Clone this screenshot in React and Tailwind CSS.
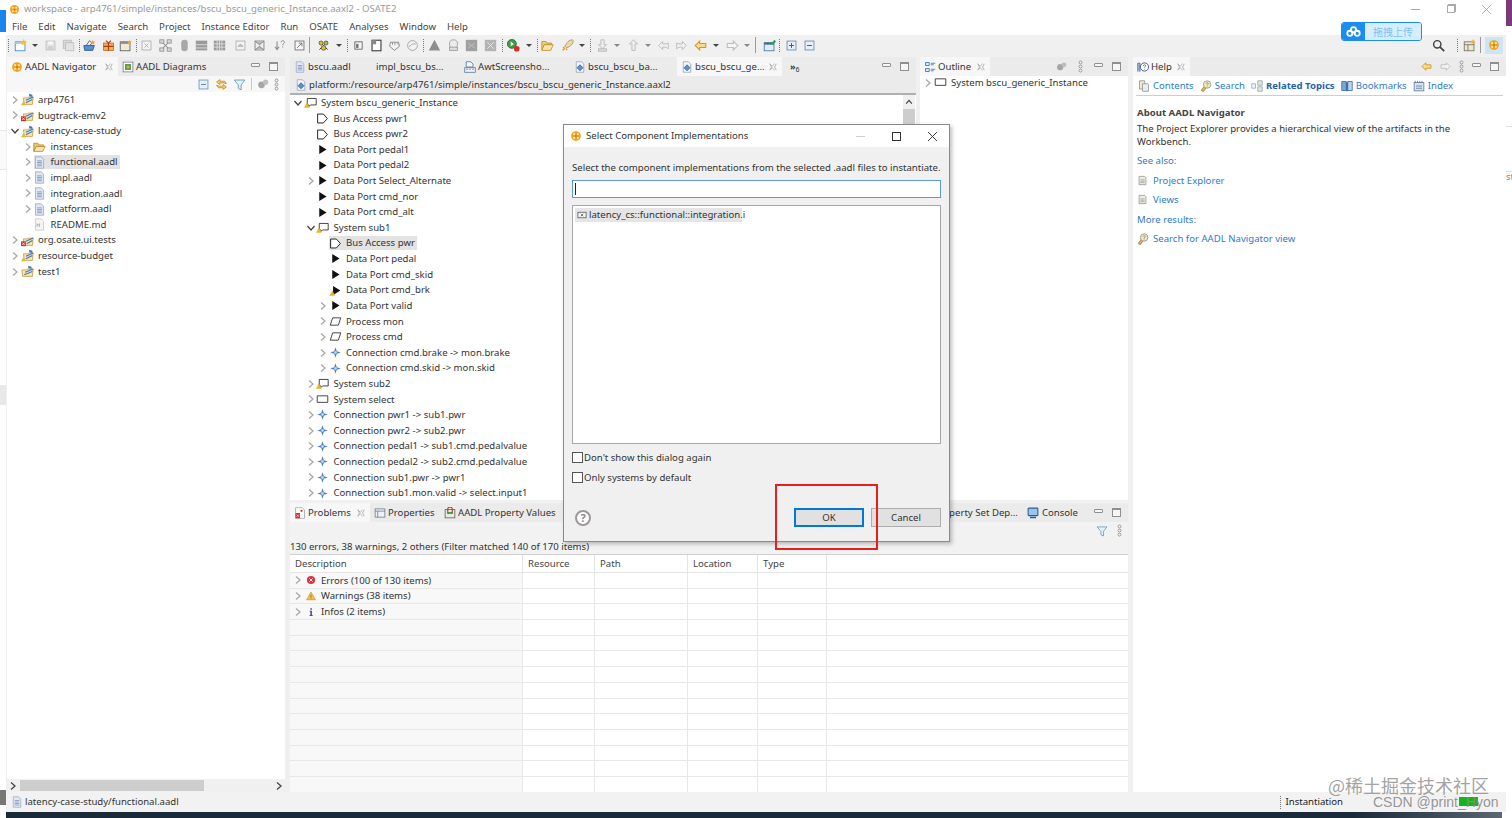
import React from 'react';

const G = {
  osate: (<><circle cx="8" cy="8" r="6.5" fill="#f3a21f" /><circle cx="5.5" cy="5.5" r="1.4" fill="#ffe9b0" /><circle cx="10.5" cy="5.5" r="1.4" fill="#ffe9b0" /><circle cx="5.5" cy="10.5" r="1.4" fill="#ffe9b0" /><circle cx="10.5" cy="10.5" r="1.4" fill="#ffe9b0" /><circle cx="8" cy="8" r="1.2" fill="#c9700c" /></>),
  project: (<><path d="M1 6h5l1-1h8l-1 9H2z" fill="#fbe6a8" stroke="#c89a3c" /><path d="M5 9l10-4M4 12l10-4" stroke="#3f78c4" strokeWidth="1.4" /><path d="M9 1l4 1v3l-4-1z" fill="#3f78c4" /></>),
  warnProject: (<><path d="M3 6h5l1-1h6l-1 9H4z" fill="#fbe6a8" stroke="#c89a3c" /><path d="M6 9l9-4M6 12l8-4" stroke="#3f78c4" strokeWidth="1.4" /><path d="M10 1l4 1v3l-4-1z" fill="#3f78c4" /><path d="M3 10l3 5H0z" fill="#eeb422" /></>),
  errProject: (<><path d="M3 6h5l1-1h6l-1 9H4z" fill="#fbe6a8" stroke="#c89a3c" /><path d="M6 9l9-4M7 12l7-4" stroke="#3f78c4" strokeWidth="1.4" /><rect x="0" y="9" width="6" height="6" fill="#d92b2b" /><path d="M1.5 10.5l3 3m0-3l-3 3" stroke="#fff" /></>),
  folder: (<><path d="M1 4h5l1 2h6v2H4l-3 6z" fill="#e9c66d" stroke="#b48a2e" /><path d="M4 8h11l-3 6H1z" fill="#fbe6a8" stroke="#b48a2e" /></>),
  aadl: (<><path d="M3 1h7l3 3v11H3z" fill="#dfe7f4" stroke="#9aa9c2" /><path d="M5 6h6M5 8h6M5 10h6M5 12h6" stroke="#7e93b8" /></>),
  md: (<><path d="M3 1h7l3 3v11H3z" fill="#f5f5f5" stroke="#c8c8c8" /><path d="M5 11V7l1.5 2L8 7v4" stroke="#aaa" fill="none" /></>),
  bus: (<path d="M2 2.5h7l5 5.5-5 5.5H2z" fill="#fff" stroke="#222" strokeWidth="1.2" />),
  port: (<path d="M4 2.5l9 5.5-9 5.5z" fill="#111" />),
  portWarn: (<><path d="M5 2.5l9 5.5-9 5.5z" fill="#111" /><path d="M4 8l3.5 6.5H.5z" fill="#eeb422" /></>),
  system: (<path d="M1.5 3.5h13v8h-13z" fill="#fff" stroke="#333" strokeWidth="1.1" />),
  systemWarn: (<><path d="M4 3h11v8H8l-2 2v-2H4z" fill="#fff" stroke="#333" strokeWidth="1.1" /><path d="M3.5 8l3.5 6.5H0z" fill="#eeb422" /></>),
  process: (<path d="M4.5 3.5h10l-3 9h-10z" fill="#fff" stroke="#333" strokeWidth="1.1" />),
  conn: (<><path d="M8 1.500l1.600 4.900L14.500 8l-4.900 1.600L8 14.500 6.400 9.600 1.500 8l4.900-1.600z" fill="#4f7fb8" /><circle cx="8" cy="8" r="1.800" fill="#b9d2ee" /></>),
  problems: (<><path d="M2 1h9l3 3v11H2z" fill="#fff" stroke="#9aa0aa" /><rect x="2" y="8" width="6" height="7" fill="#d92b2b" /><path d="M3.5 10l3 3m0-3l-3 3" stroke="#fff" /><circle cx="10" cy="5" r="1.5" fill="#d92b2b" /></>),
  props: (<><rect x="1.5" y="2.5" width="13" height="11" fill="#eef1f5" stroke="#64748b" /><path d="M1.5 5.5h13M5 5.5v8" stroke="#64748b" /></>),
  propVals: (<><rect x="1.5" y="3.5" width="13" height="11" fill="#e8edd8" stroke="#4b5563" /><path d="M5 9V3a3 3 0 016 0v6" fill="none" stroke="#c0392b" strokeWidth="1.5" /><path d="M5 8h6" stroke="#15803d" strokeWidth="2" /></>),
  diagrams: (<><rect x="1.5" y="1.5" width="13" height="13" fill="#fff" stroke="#6b7280" /><rect x="4" y="4" width="8" height="8" fill="#5f9e4d" /><circle cx="8" cy="8" r="2" fill="#d9b43a" /></>),
  outline: (<><path d="M2 2h5v4H2zM2 10h5v4H2z" fill="#dbeafe" stroke="#2563a8" /><path d="M9 3h6M9 5h4M9 11h6M9 13h4" stroke="#2563a8" /></>),
  console: (<><rect x="1.5" y="1.5" width="13" height="10" rx="1" fill="#9cc3ea" stroke="#2a5c96" strokeWidth="1.4" /><path d="M4 14h8" stroke="#2a5c96" strokeWidth="2" /></>),
  help: (<><circle cx="10" cy="8" r="5.5" fill="#fff" stroke="#3a5f8f" strokeWidth="1.2" /><path d="M8.5 6.5c0-2 3-2 3 0 0 1.200-1.500 1.200-1.500 2.500M10 10.500v1" fill="none" stroke="#3a5f8f" /><path d="M1 14V3h3v11" fill="#a8c0dc" stroke="#3a5f8f" /></>),
  contents: (<><path d="M2 1h7v11H2z" fill="#f3e8cf" stroke="#8a8a8a" /><path d="M6 5h7l1 1v9H6z" fill="#e7edf6" stroke="#8a8a8a" /></>),
  searchTopic: (<><path d="M6 8l-4.500 6 3 1.500 4-5.500" fill="#e6b655" stroke="#8a7a4a" /><circle cx="9.500" cy="6" r="5" fill="#f8e8b4" stroke="#8a8a8a" /><path d="M8 4.500c.5-1.500 3.500-1 3 .8-.3.900-1.500 1-1.500 2.200M9.500 9v.8" fill="none" stroke="#3b82c4" /></>),
  related: (<><path d="M1 5h5v6H1z" fill="#f1f5fa" stroke="#8ca0bc" /><path d="M9 1h6v6H9zM9 9h6v6H9z" fill="#e8e4d0" stroke="#8ca0bc" /></>),
  bookmarks: (<><path d="M1 2h6v12H1z" fill="#7ea6d8" stroke="#2d5f9c" /><path d="M9 2h6v12H9z" fill="#bcd3ec" stroke="#2d5f9c" /><path d="M7 3h2v12H7z" fill="#2d5f9c" /></>),
  indexIcon: (<><rect x="1.500" y="3.500" width="13" height="11" fill="#d9e3ef" stroke="#4f6f97" /><path d="M3 1v3M6 1v3M9 1v3M12 1v3" stroke="#4f6f97" /><path d="M4 8h8M4 11h8" stroke="#4f6f97" /></>),
  page: (<><path d="M3 2h8l2 2v10H3z" fill="#ececdf" stroke="#888" /><path d="M5 7h6M5 9h6M5 11h6" stroke="#999" /></>),
  new: (<><rect x="1.500" y="3.500" width="12" height="11" fill="#fff" stroke="#3f7fb8" /><path d="M1.500 3.500h12v2.500h-12z" fill="#a9c9e8" /><path d="M12 0l1.200 2.500 2.800.5-2 2 .5 2.800-2.500-1.300-2.500 1.300.5-2.800-2-2 2.800-.5z" fill="#f2c230" /></>),
  save: (<><rect x="2.500" y="2.500" width="11" height="11" fill="#e2e2e2" stroke="#bdbdbd" /><rect x="5" y="3" width="6" height="4" fill="#f5f5f5" /><rect x="5" y="9" width="6" height="4" fill="#cfcfcf" /></>),
  saveall: (<><rect x="1.500" y="1.500" width="10" height="10" fill="#d8d8d8" stroke="#bdbdbd" /><rect x="4.500" y="4.500" width="10" height="10" fill="#e2e2e2" stroke="#bdbdbd" /></>),
  pkg: (<><path d="M1 8h13l-2 6H2z" fill="#5b8dd0" stroke="#28528c" /><path d="M4 8l4-6 3 3-3 3z" fill="#e7edf6" stroke="#28528c" /><path d="M12 1l1 2 2 .5-1.500 1.500.5 2-2-1-2 1 .5-2L9 3.500l2-.5z" fill="#eda62c" /></>),
  box: (<><rect x="2" y="5" width="12" height="9" fill="#f0b357" stroke="#b36b16" /><path d="M8 5v9M2 9h12" stroke="#b33b16" strokeWidth="1.500" /><path d="M5 2l3 3 3-3" fill="none" stroke="#b33b16" strokeWidth="1.400" /></>),
  docstar: (<><rect x="1.500" y="3.500" width="12" height="11" fill="#f0ead8" stroke="#555" /><path d="M1.500 3.500h12v2.500h-12z" fill="#8c8c8c" /><path d="M13 1l.8 1.800 2 .3-1.400 1.400.3 2-1.700-1-1.800 1 .4-2L10.200 3l2-.3z" fill="#f0a92c" /></>),
  xbox: (<><rect x="2.500" y="2.500" width="11" height="11" fill="#f3f3f3" stroke="#a8a8a8" /><path d="M5.500 5.500l5 5m0-5l-5 5" stroke="#a8a8a8" /></>),
  nodes: (<><path d="M4 4l8 8m0-8l-8 8" stroke="#8a8a8a" strokeWidth="1.300" /><rect x="1" y="1" width="5" height="4" fill="#dcdcdc" stroke="#8a8a8a" /><rect x="10" y="1" width="5" height="4" fill="#dcdcdc" stroke="#8a8a8a" /><rect x="1" y="11" width="5" height="4" fill="#dcdcdc" stroke="#8a8a8a" /><rect x="10" y="11" width="5" height="4" fill="#dcdcdc" stroke="#8a8a8a" /></>),
  capsule: (<rect x="4" y="1" width="8" height="14" rx="4" fill="#a8a8a8" />),
  bars: (<><rect x="1" y="2" width="14" height="12" fill="#9a9a9a" /><path d="M1 7h14M1 11h14" stroke="#e6e6e6" /></>),
  grid: (<><rect x="1" y="2" width="14" height="12" fill="#9a9a9a" /><path d="M1 6h14M1 10h14M5 2v12M8 2v12M11 2v12" stroke="#e6e6e6" /></>),
  frame: (<><rect x="2.500" y="2.500" width="11" height="11" fill="#f3f3f3" stroke="#a8a8a8" /><path d="M5 9l3-3 3 3z" fill="#c8c8c8" stroke="#a8a8a8" /></>),
  bow: (<><rect x="2.500" y="2.500" width="11" height="11" fill="#eee" stroke="#777" /><path d="M2.500 2.500L8 7l5.500-4.500M2.500 13.500L8 9l5.500 4.500" fill="#bbb" stroke="#777" /></>),
  arrowq: (<><path d="M5 3v9m-2.500-2.500L5 13l2.500-3.500" fill="none" stroke="#888" strokeWidth="1.300" /><path d="M10 4c0-2.500 4-2.500 4 0 0 1.500-2 1.500-2 3.500M12 9v1.500" fill="none" stroke="#888" strokeWidth="1.200" /></>),
  expand: (<><rect x="2.500" y="2.500" width="11" height="11" fill="#f6f6f6" stroke="#666" /><path d="M5 11l6-6m-4 0h4v4" fill="none" stroke="#666" /></>),
  bug: (<><path d="M3 3l10 10M13 3L3 13" stroke="#333" strokeWidth="1.200" /><circle cx="5" cy="5" r="2.500" fill="#e3c02c" stroke="#555" /><circle cx="11" cy="5" r="2.500" fill="#a8c04a" stroke="#555" /><circle cx="8" cy="11" r="2.800" fill="#e3c02c" stroke="#555" /></>),
  smalldoc: (<><rect x="3.500" y="3.500" width="9" height="9" fill="#f5f5f5" stroke="#555" /><rect x="5" y="6" width="3" height="5" fill="#777" /></>),
  doc: (<><rect x="2.500" y="1.500" width="11" height="13" fill="#fff" stroke="#333" strokeWidth="1.300" /><rect x="2.500" y="1.500" width="5" height="5" fill="#888" /></>),
  paw: (<><path d="M3 4l10 0 1 5-6 5-6-5z" fill="#f2f2f2" stroke="#777" /><path d="M5 6h1M8 6h1M11 6h.5" stroke="#555" strokeWidth="1.500" /></>),
  ring: (<><circle cx="8" cy="8" r="6" fill="#f2f2f2" stroke="#999" /><path d="M4 10c2-4 5-4 8-4" fill="none" stroke="#999" /></>),
  tri: (<path d="M8 1l7 13H1z" fill="#8d8d8d" />),
  stamp: (<><circle cx="8" cy="6" r="5" fill="#ececec" stroke="#999" /><rect x="3" y="10" width="10" height="4" fill="#ddd" stroke="#999" /></>),
  graysq: (<><rect x="1" y="1" width="14" height="14" fill="#a0a0a0" /><path d="M4 5l8 6m0-6l-8 6" stroke="#c8c8c8" /></>),
  graychk: (<><rect x="1" y="1" width="14" height="14" fill="#b4b4b4" /><path d="M4 4l4 4 4-4M4 12l4-4 4 4" fill="none" stroke="#eee" /></>),
  run: (<><circle cx="6" cy="6" r="5.500" fill="#3d9c4a" stroke="#1f6b2a" /><path d="M4.500 3l4 3-4 3z" fill="#fff" /><circle cx="12" cy="12" r="3.500" fill="#d42c2c" /></>),
  openfolder: (<><path d="M1 3h5l1 2h6v2H4l-2 6H1z" fill="#edcf80" stroke="#bf8a25" /><path d="M4 7h11l-3 7H1z" fill="#fbe6a8" stroke="#bf8a25" /></>),
  rocket: (<><path d="M14 1c-4 0-7 3-9 8l2 2c5-2 8-5 8-9z" fill="#e9d7a5" stroke="#a5955a" /><path d="M5 9l-3 1 1 1zM7 11l-1 3 2-1z" fill="#d96a2b" /><path d="M2 14l3-3" stroke="#e6a630" strokeWidth="2" /></>),
  personDown: (<><path d="M6 1h4v6h3l-5 5-5-5h3z" fill="#ededed" stroke="#b5b5b5" /><rect x="3" y="12" width="10" height="3" fill="#dcdcdc" stroke="#b5b5b5" /></>),
  personUp: (<><path d="M8 1l5 5h-3v8H6V6H3z" fill="#ededed" stroke="#b5b5b5" /></>),
  outlineLeft: (<path d="M7 3L2 8l5 5v-3h4l3 2V5l-3 1H7z" fill="#f0f0f0" stroke="#b5b5b5" />),
  outlineRight: (<path d="M9 3l5 5-5 5v-3H5l-3 2V5l3 1h4z" fill="#f0f0f0" stroke="#b5b5b5" />),
  yellowLeft: (<path d="M7 2.500L1.500 8 7 13.500V10.500h7.500v-5H7z" fill="#f6dc8a" stroke="#d19a1f" strokeWidth="1.300" />),
  grayRight: (<path d="M9 2.500L14.500 8 9 13.500V10.500H1.500v-5H9z" fill="#f5f5f5" stroke="#bcbcbc" strokeWidth="1.300" />),
  newwin: (<><rect x="1.500" y="4.500" width="12" height="10" fill="#e3edf7" stroke="#3f6f9f" /><path d="M1.500 4.500h12v2.500h-12z" fill="#3f6f9f" /><path d="M10 6l4-5 2 2-4 4z" fill="#2e9e4a" /></>),
  plusbox: (<><rect x="2.500" y="2.500" width="11" height="11" fill="#e7eff8" stroke="#5a86b5" /><path d="M5 8h6M8 5v6" stroke="#2f5f95" strokeWidth="1.200" /></>),
  minusbox: (<><rect x="2.500" y="2.500" width="11" height="11" fill="#e7eff8" stroke="#5a86b5" /><path d="M5 8h6" stroke="#2f5f95" strokeWidth="1.200" /></>),
  collapse: (<><rect x="2.500" y="2.500" width="11" height="11" fill="#e7eff8" stroke="#6b8fb8" /><path d="M5 8h6" stroke="#51759d" /></>),
  link: (<><path d="M2 5l4-3v2h6l2 3-3-1H6v2z" fill="#f4d27a" stroke="#c98a1f" /><path d="M14 11l-4 3v-2H4l-2-3 3 1h5V8z" fill="#f4d27a" stroke="#c98a1f" /></>),
  filter: (<path d="M1.500 2.500h13L10 8.500v6L6.500 13V8.500z" fill="#e6f0f7" stroke="#5c93b5" />),
  gears: (<><circle cx="6" cy="9" r="4.500" fill="#a6a6a6" /><circle cx="11.500" cy="5.500" r="3.500" fill="#bdbdbd" /></>),
  search: (<><circle cx="6.500" cy="6.500" r="4.500" fill="none" stroke="#444" strokeWidth="1.800" /><path d="M10 10l5 5" stroke="#444" strokeWidth="2.200" /></>),
  perspective: (<><rect x="1.500" y="3.500" width="12" height="11" fill="#f1e7c9" stroke="#6b6b6b" /><path d="M1.500 7h12M6 7v7.500" stroke="#6b6b6b" /><path d="M12.500 0l1 2 2 .4-1.500 1.400.4 2-1.900-1-1.900 1 .4-2L9.500 2.400l2-.4z" fill="#eeb422" /></>),
  impl: (<><rect x="1.500" y="3.500" width="13" height="9" fill="#f5f5f5" stroke="#333" /><path d="M6 6l4 4m0-4l-4 4" stroke="#333" /></>),
  error: (<><circle cx="8" cy="8" r="6.500" fill="#d8343f" /><path d="M5.500 5.500l5 5m0-5l-5 5" stroke="#fff" strokeWidth="1.500" /></>),
  warning: (<><path d="M8 1.500l7 12.500H1z" fill="#f2c14a" stroke="#c98a1f" /><path d="M8 6v4.500M8 11.500v1" stroke="#7a4a00" /></>),
  info: (<path d="M7 2h2.400v2.200H7zM6 6h3.400v7H11v1.500H5.500V13H7V7.500H6z" fill="#3a3fb0" />),
  awt: (<><path d="M3 1h6l3 3v4H3z" fill="#f5f5f5" stroke="#3f6f9f" /><rect x="1" y="9" width="14" height="6" fill="#f0f5fa" stroke="#3f6f9f" /><path d="M3 11h2M7 11h2M11 11h2" stroke="#b33b16" /></>),
  inst: (<><path d="M3 1h7l3 3v11H3z" fill="#f3f6fb" stroke="#8ca0bc" /><path d="M8 5l4 4-4 4-4-4z" fill="#5f8fc7" stroke="#2f5f95" /></>),
};

const Glyph = ({ name, className = 'size-[12px]' }) => (
  <svg viewBox="0 0 16 16" className={`${className} shrink-0`}>{G[name]}</svg>
);

const Chevron = ({ open, dark }) => (
  <svg viewBox="0 0 10 10" className="size-[10px]" fill="none" stroke={dark ? '#444' : '#a8a8a8'} strokeWidth="1.300">
    <path d={open ? 'M1.500 3l3.500 4 3.500-4' : 'M3 1.500l4 3.500-4 3.500'} />
  </svg>
);

const Kebab = () => (
  <svg viewBox="0 0 6 16" className="h-[13px] w-[5px]" fill="#f4f4f4" stroke="#8a8a8a">
    <circle cx="3" cy="3" r="1.800" /><circle cx="3" cy="8" r="1.800" /><circle cx="3" cy="13" r="1.800" />
  </svg>
);

const CloseX = () => (
  <svg viewBox="0 0 10 10" className="size-[8px] shrink-0" fill="none" stroke="#a5a5a5">
    <path d="M1 1l3 3 3-3M1 9l3-3 3 3M1 1l2 4-2 4M9 1l-2 4 2 4" />
  </svg>
);

const MinMax = () => (
  <div className="flex items-center gap-[9px]">
    <div className="h-[4px] w-[9px] -translate-y-[2px] rounded-[1px] border border-[#8f8f8f] bg-[#f6f6f6]" />
    <div className="size-[9px] border border-[#8f8f8f] border-t-2 bg-[#f6f6f6]" />
  </div>
);

const Caret = () => <div className="border-x-[3.5px] border-t-[3.5px] border-x-transparent border-t-[#444]" />;
const CaretLight = () => <div className="border-x-[3.5px] border-t-[3.5px] border-x-transparent border-t-[#888]" />;
const Grip = () => <div className="h-[13px] border-l border-dotted border-[#777]" />;
const Sep = () => <div className="h-[16px] border-l border-[#9a9a9a]" />;

const toolbar = [
  ['grip', 'w-[12px]'], ['new', 'w-[15px]'], ['caret', 'w-[15px]'], ['save', 'w-[18px]'], ['saveall', 'w-[11px]'],
  ['grip', 'w-[10px]'], ['pkg', 'w-[19px]'], ['box', 'w-[17px]'], ['docstar', 'w-[11px]'], ['grip', 'w-[10px]'],
  ['xbox', 'w-[19px]'], ['nodes', 'w-[19px]'], ['capsule', 'w-[17px]'], ['bars', 'w-[18px]'], ['grid', 'w-[21px]'],
  ['frame', 'w-[19px]'], ['bow', 'w-[20px]'], ['arrowq', 'w-[20px]'], ['expand', 'w-[10px]'], ['sep', 'w-[14px]'],
  ['bug', 'w-[16px]'], ['caret', 'w-[8px]'], ['grip', 'w-[11px]'], ['smalldoc', 'w-[18px]'], ['doc', 'w-[18px]'],
  ['paw', 'w-[18px]'], ['ring', 'w-[11px]'], ['grip', 'w-[11px]'], ['tri', 'w-[19px]'], ['stamp', 'w-[18px]'],
  ['graysq', 'w-[19px]'], ['graychk', 'w-[12px]'], ['grip', 'w-[11px]'], ['run', 'w-[16px]'], ['caret', 'w-[8px]'],
  ['grip', 'w-[10px]'], ['openfolder', 'w-[20px]'], ['rocket', 'w-[15px]'], ['caret', 'w-[8px]'], ['grip', 'w-[12px]'],
  ['personDown', 'w-[15px]'], ['caretLight', 'w-[16px]'], ['personUp', 'w-[15px]'], ['caretLight', 'w-[15px]'],
  ['outlineLeft', 'w-[18px]'], ['outlineRight', 'w-[19px]'], ['yellowLeft', 'w-[16px]'], ['caret', 'w-[16px]'],
  ['grayRight', 'w-[15px]'], ['caretLight', 'w-[8px]'], ['sep', 'w-[14px]'], ['newwin', 'w-[10px]'], ['grip', 'w-[12px]'],
  ['plusbox', 'w-[18px]'], ['minusbox', 'w-[14px]'],
];

const ToolCell = ({ name, width }) => {
  let inner = <Glyph name={name} className="size-[13px]" />;
  if (name === 'grip') inner = <Grip />;
  if (name === 'sep') inner = <Sep />;
  if (name === 'caret') inner = <Caret />;
  if (name === 'caretLight') inner = <CaretLight />;
  return (
    <div className={`${width} shrink-0`}>
      <div className="flex w-[14px] items-center justify-center">{inner}</div>
    </div>
  );
};

const navRows = [
  { level: 0, chev: 'r', icon: 'warnProject', label: 'arp4761' },
  { level: 0, chev: 'r', icon: 'errProject', label: 'bugtrack-emv2' },
  { level: 0, chev: 'd', icon: 'warnProject', label: 'latency-case-study' },
  { level: 1, chev: 'r', icon: 'folder', label: 'instances' },
  { level: 1, chev: 'r', icon: 'aadl', label: 'functional.aadl', selected: true },
  { level: 1, chev: 'r', icon: 'aadl', label: 'impl.aadl' },
  { level: 1, chev: 'r', icon: 'aadl', label: 'integration.aadl' },
  { level: 1, chev: 'r', icon: 'aadl', label: 'platform.aadl' },
  { level: 1, icon: 'md', label: 'README.md' },
  { level: 0, chev: 'r', icon: 'errProject', label: 'org.osate.ui.tests' },
  { level: 0, chev: 'r', icon: 'warnProject', label: 'resource-budget' },
  { level: 0, chev: 'r', icon: 'project', label: 'test1' },
];

const editorRows = [
  { level: 0, chev: 'd', icon: 'systemWarn', label: 'System bscu_generic_Instance' },
  { level: 1, icon: 'bus', label: 'Bus Access pwr1' },
  { level: 1, icon: 'bus', label: 'Bus Access pwr2' },
  { level: 1, icon: 'port', label: 'Data Port pedal1' },
  { level: 1, icon: 'port', label: 'Data Port pedal2' },
  { level: 1, chev: 'r', icon: 'port', label: 'Data Port Select_Alternate' },
  { level: 1, icon: 'port', label: 'Data Port cmd_nor' },
  { level: 1, icon: 'port', label: 'Data Port cmd_alt' },
  { level: 1, chev: 'd', icon: 'systemWarn', label: 'System sub1' },
  { level: 2, icon: 'bus', label: 'Bus Access pwr', selected: true },
  { level: 2, icon: 'port', label: 'Data Port pedal' },
  { level: 2, icon: 'port', label: 'Data Port cmd_skid' },
  { level: 2, icon: 'portWarn', label: 'Data Port cmd_brk' },
  { level: 2, chev: 'r', icon: 'port', label: 'Data Port valid' },
  { level: 2, chev: 'r', icon: 'process', label: 'Process mon' },
  { level: 2, chev: 'r', icon: 'process', label: 'Process cmd' },
  { level: 2, chev: 'r', icon: 'conn', label: 'Connection cmd.brake -> mon.brake' },
  { level: 2, chev: 'r', icon: 'conn', label: 'Connection cmd.skid -> mon.skid' },
  { level: 1, chev: 'r', icon: 'systemWarn', label: 'System sub2' },
  { level: 1, chev: 'r', icon: 'system', label: 'System select' },
  { level: 1, chev: 'r', icon: 'conn', label: 'Connection pwr1 -> sub1.pwr' },
  { level: 1, chev: 'r', icon: 'conn', label: 'Connection pwr2 -> sub2.pwr' },
  { level: 1, chev: 'r', icon: 'conn', label: 'Connection pedal1 -> sub1.cmd.pedalvalue' },
  { level: 1, chev: 'r', icon: 'conn', label: 'Connection pedal2 -> sub2.cmd.pedalvalue' },
  { level: 1, chev: 'r', icon: 'conn', label: 'Connection sub1.pwr -> pwr1' },
  { level: 1, chev: 'r', icon: 'conn', label: 'Connection sub1.mon.valid -> select.input1' },
];

const levelPad = { 0: 'pl-[2px]', 1: 'pl-[14.5px]', 2: 'pl-[27px]' };

const TreeRow = ({ row }) => (
  <div className={`flex h-[15.62px] items-center ${levelPad[row.level]}`}>
    <div className="flex w-[12px] justify-center">{row.chev && <Chevron open={row.chev === 'd'} dark={row.chev === 'd'} />}</div>
    <div className={`flex h-[14px] items-center ${row.selected ? 'bg-[#e3e3e3]' : ''}`}>
      <div className="flex w-[12px] justify-center"><Glyph name={row.icon} className="size-[13px]" /></div>
      <span className="whitespace-nowrap pl-[5px] pr-[2px]">{row.label}</span>
    </div>
  </div>
);

const Tab = ({ icon, label, active, width, closable, noIcon }) => (
  <div className={`flex h-full ${width} shrink-0 items-center ${noIcon ? 'pl-[14px]' : 'pl-[4px]'} ${active ? 'bg-[#f7f7f7]' : ''}`}>
    {icon && <Glyph name={icon} />}
    <span className="whitespace-nowrap pl-[2px]">{label}</span>
    {closable && <div className="ml-auto pr-[5px]"><CloseX /></div>}
  </div>
);

const tableRows = [
  { icon: 'error', label: 'Errors (100 of 130 items)' },
  { icon: 'warning', label: 'Warnings (38 items)' },
  { icon: 'info', label: 'Infos (2 items)' },
  ...Array.from({ length: 11 }, () => ({})),
];

const helpNav = [
  { icon: 'contents', label: 'Contents' },
  { icon: 'searchTopic', label: 'Search' },
  { icon: 'related', label: 'Related Topics', bold: true },
  { icon: 'bookmarks', label: 'Bookmarks' },
  { icon: 'indexIcon', label: 'Index' },
];

const Cols = ({ children }) => (
  <div className="grid grid-cols-[233px_72px_93px_70px_69px_1fr]">{children}</div>
);

function Dialog() {
  return (
    <div className="absolute left-[563px] top-[124px] flex h-[418px] w-[387px] flex-col border border-[#8a8a8a] bg-[#f0f0f0] shadow-[2px_2px_4px_rgba(0,0,0,0.25)]">
      <div className="flex h-[22px] shrink-0 items-center bg-white pl-[6px] pr-[12px]">
        <Glyph name="osate" className="size-[12px]" />
        <span className="pl-[4px]">Select Component Implementations</span>
        <div className="ml-auto flex items-center gap-[27px]">
          <div className="h-px w-[9px] bg-[#ccc]" />
          <div className="size-[9px] border border-[#333]" />
          <svg viewBox="0 0 10 10" className="size-[9px]" stroke="#222"><path d="M0 0l10 10M10 0L0 10" /></svg>
        </div>
      </div>
      <div className="flex min-h-0 flex-1 flex-col px-[8px]">
        <p className="whitespace-nowrap pt-[14px] leading-[13px]">Select the component implementations from the selected .aadl files to instantiate.</p>
        <div className="mt-[6px] flex h-[18px] items-center border border-[#5a9bd5] bg-white pl-[2px]">
          <div className="h-[12px] w-px bg-[#222]" />
        </div>
        <div className="mt-[7px] h-[239px] border border-[#a8a8a8] bg-white p-[2px]">
          <div className="flex h-[14px] w-[167px] items-center bg-[#e5e5e5] pl-[2px]">
            <Glyph name="impl" className="size-[10px]" />
            <span className="whitespace-nowrap pl-[2px]">latency_cs::functional::integration.i</span>
          </div>
        </div>
        <label className="mt-[7px] flex h-[13px] items-center gap-[1px]">
          <span className="size-[11px] border border-[#555] bg-white" />
          <span>Don't show this dialog again</span>
        </label>
        <label className="mt-[7px] flex h-[13px] items-center gap-[1px]">
          <span className="size-[11px] border border-[#555] bg-white" />
          <span>Only systems by default</span>
        </label>
        <div className="mt-[24px] flex items-center">
          <div className="ml-[3px] flex size-[16px] items-center justify-center rounded-full border-2 border-[#9a9a9a] bg-white text-[11px] font-bold text-[#888]">?</div>
          <button className="ml-auto h-[19px] w-[70px] border-2 border-[#0078d7] bg-[#e1e1e1]">OK</button>
          <button className="ml-[7px] h-[19px] w-[70px] border border-[#adadad] bg-[#e1e1e1]">Cancel</button>
        </div>
      </div>
    </div>
  );
}

export default function App() {
  return (
    <div className="relative flex h-[818px] w-[1512px] overflow-hidden bg-white font-['Noto_Sans',sans-serif] text-[9.6px] leading-none text-[#333]">
      {/* neighbouring windows peeking out at both sides */}
      <div className="flex w-[6px] shrink-0 flex-col">
        <div className="h-[10px]" />
        <div className="h-[22px] bg-[#1a84ee]" />
        <div className="h-[98px]" />
        <div className="h-[40px] border-y border-[#e3e3e3] bg-[#fafafa]" />
        <div className="h-[215px]" />
        <div className="h-[20px] bg-[#e8e8e8]" />
        <div className="h-[385px]" />
        <div className="h-[15px] bg-[#777]" />
      </div>

      <div className="flex w-[1500px] shrink-0 flex-col">
        <div className="flex h-[18px] shrink-0 items-center pl-[2px] text-[#9a9a9a]">
          <Glyph name="osate" className="ml-[1px] size-[11px]" />
          <span className="whitespace-nowrap pl-[4px]">workspace - arp4761/simple/instances/bscu_bscu_generic_Instance.aaxl2 - OSATE2</span>
          <div className="ml-auto flex items-center gap-[27px] pr-[15px]">
            <div className="h-px w-[9px] bg-[#aaa]" />
            <div className="relative size-[8px] border border-[#aaa] shadow-[1px_-1px_0_0_#aaa]" />
            <svg viewBox="0 0 10 10" className="size-[9px]" stroke="#aaa"><path d="M0 0l10 10M10 0L0 10" /></svg>
          </div>
        </div>

        <div className="flex h-[17px] shrink-0 items-center gap-[11px] pl-[6px] text-[#444]">
          {['File', 'Edit', 'Navigate', 'Search', 'Project', 'Instance Editor', 'Run', 'OSATE', 'Analyses', 'Window', 'Help'].map((m) => (
            <span key={m}>{m}</span>
          ))}
        </div>

        <div className="flex h-[20px] shrink-0 items-center justify-between bg-[#f0f0f0] pr-[3px]">
          <div className="-ml-[5px] flex items-center">
            {toolbar.map(([name, width], i) => (
              <ToolCell key={i} name={name} width={width} />
            ))}
          </div>
          <div className="flex items-center gap-[4px]">
            <Glyph name="search" className="mr-[8px] size-[13px]" />
            <Grip />
            <Glyph name="perspective" className="ml-[1px] size-[13px]" />
            <Sep />
            <div className="flex h-[17px] w-[18px] items-center justify-center bg-[#cde4f7]">
              <Glyph name="osate" className="size-[12px]" />
            </div>
          </div>
        </div>

        <div className="h-[2px] shrink-0 bg-[#f0f0f0]" />

        <div className="flex h-[735px] shrink-0 gap-[5px] bg-[#f0f0f0] pl-[1px]">
          {/* navigator */}
          <section className="flex w-[278px] shrink-0 flex-col bg-white">
            <div className="flex h-[19px] shrink-0 items-center bg-[#ebebeb]">
              <Tab icon="osate" label="AADL Navigator" active width="w-[111px]" closable />
              <Tab icon="diagrams" label="AADL Diagrams" width="w-[110px]" />
              <div className="ml-auto pr-[7px]"><MinMax /></div>
            </div>
            <div className="flex h-[16px] shrink-0 items-center justify-end gap-[5px] bg-[#f7f7f7] pr-[6px]">
              <Glyph name="collapse" className="size-[13px]" />
              <Glyph name="link" className="size-[13px]" />
              <Glyph name="filter" className="size-[13px]" />
              <div className="h-[12px] border-l border-[#c8c8c8]" />
              <Glyph name="gears" className="size-[12px]" />
              <Kebab />
            </div>
            <div className="min-h-0 flex-1">
              {navRows.map((row) => <TreeRow key={row.label} row={row} />)}
            </div>
            <div className="flex h-[13px] shrink-0 items-center bg-[#f0f0f0] px-[1px]">
              <Chevron open={false} dark />
              <div className="ml-[2px] h-[11px] w-[184px] bg-[#cdcdcd]" />
              <div className="ml-auto"><Chevron dark /></div>
            </div>
          </section>

          <div className="flex w-[838px] shrink-0 flex-col gap-[3px]">
            <div className="flex h-[443px] shrink-0 gap-[4px]">
              {/* editor */}
              <section className="flex w-[626px] shrink-0 flex-col overflow-hidden bg-white">
                <div className="flex h-[19px] shrink-0 items-center bg-[#ebebeb]">
                  <Tab icon="aadl" label="bscu.aadl" width="w-[70px]" />
                  <Tab label="impl_bscu_bs..." width="w-[100px]" noIcon />
                  <Tab icon="awt" label="AwtScreensho..." width="w-[110px]" />
                  <Tab icon="inst" label="bscu_bscu_ba..." width="w-[107px]" />
                  <Tab icon="inst" label="bscu_bscu_ge..." active width="w-[105px]" closable />
                  <span className="pl-[8px] text-[9px] font-bold">»<sub className="text-[7px] font-normal">6</sub></span>
                  <div className="ml-auto pr-[7px]"><MinMax /></div>
                </div>
                <div className="flex h-[19px] shrink-0 items-center border-b-2 border-[#b0b0b0] bg-[#ebebeb] pl-[5px]">
                  <Glyph name="inst" />
                  <span className="pl-[2px]">platform:/resource/arp4761/simple/instances/bscu_bscu_generic_Instance.aaxl2</span>
                </div>
                <div className="flex min-h-0 flex-1">
                  <div className="min-w-0 flex-1">
                    {editorRows.map((row) => <TreeRow key={row.label} row={row} />)}
                  </div>
                  <div className="mr-px flex w-[12px] shrink-0 flex-col bg-[#f0f0f0]">
                    <div className="flex h-[14px] items-center justify-center">
                      <svg viewBox="0 0 10 10" className="size-[8px]" fill="none" stroke="#444" strokeWidth="1.500"><path d="M1.500 7L5 3l3.500 4" /></svg>
                    </div>
                    <div className="h-[60px] bg-[#cdcdcd]" />
                  </div>
                </div>
              </section>
              {/* outline */}
              <section className="flex min-w-0 flex-1 flex-col bg-white">
                <div className="flex h-[19px] shrink-0 items-center bg-[#ebebeb]">
                  <Tab icon="outline" label="Outline" active width="w-[70px]" closable />
                  <div className="ml-auto flex items-center gap-[11px] pr-[7px]">
                    <Glyph name="gears" className="size-[11px]" />
                    <Kebab />
                    <MinMax />
                  </div>
                </div>
                <div className="-mt-[1px]">
                  <TreeRow row={{ level: 0, chev: 'r', icon: 'system', label: 'System bscu_generic_Instance' }} />
                </div>
              </section>
            </div>

            {/* problems */}
            <section className="flex min-h-0 flex-1 flex-col bg-white">
              <div className="flex h-[19px] shrink-0 items-center bg-[#ebebeb]">
                <Tab icon="problems" label="Problems" active width="w-[80px]" closable />
                <Tab icon="props" label="Properties" width="w-[70px]" />
                <Tab icon="propVals" label="AADL Property Values" width="w-[120px]" />
                <div className="ml-auto flex items-center pr-[7px]">
                  <span className="whitespace-nowrap">AADL Property Set Dep...</span>
                  <Glyph name="console" className="ml-[9px] size-[12px]" />
                  <span className="pl-[3px]">Console</span>
                  <div className="pl-[16px]"><MinMax /></div>
                </div>
              </div>
              <div className="flex h-[17px] shrink-0 items-center justify-end gap-[9px] bg-[#f2f2f2] pr-[6px]">
                <Glyph name="filter" className="size-[12px]" />
                <Kebab />
              </div>
              <div className="h-[16px] shrink-0 whitespace-nowrap border-b border-[#d0d0d0] bg-[#f2f2f2] pt-[2px] leading-[11px]">
                130 errors, 38 warnings, 2 others (Filter matched 140 of 170 items)
              </div>
              <div className="relative flex h-[18px] shrink-0 items-center border-b border-[#e4e4e4]">
                <Cols>
                  {['Description', 'Resource', 'Path', 'Location', 'Type'].map((h) => (
                    <div key={h} className="flex h-[17px] items-center border-r border-[#e4e4e4] pl-[5px] text-[#444]">{h}</div>
                  ))}
                </Cols>
              </div>
              <div className="min-h-0 flex-1 overflow-hidden">
                {tableRows.map((row, i) => (
                  <Cols key={i}>
                    <div className="flex h-[15.7px] items-center border-r border-b border-[#e8e8e8] bg-[#f8f8f8] pl-[3px]">
                      {row.label && (
                        <>
                          <Chevron />
                          <Glyph name={row.icon} className="ml-[3px] size-[10px]" />
                          <span className="pl-[5px]">{row.label}</span>
                        </>
                      )}
                    </div>
                    <div className="h-[15.7px] border-r border-b border-[#e8e8e8]" />
                    <div className="h-[15.7px] border-r border-b border-[#e8e8e8]" />
                    <div className="h-[15.7px] border-r border-b border-[#e8e8e8]" />
                    <div className="h-[15.7px] border-r border-b border-[#e8e8e8]" />
                    <div className="h-[15.7px] border-b border-[#e8e8e8]" />
                  </Cols>
                ))}
              </div>
            </section>
          </div>

          {/* help */}
          <section className="flex min-w-0 flex-1 flex-col bg-white">
            <div className="flex h-[19px] shrink-0 items-center bg-[#ebebeb]">
              <Tab icon="help" label="Help" active width="w-[57px]" closable />
              <div className="ml-auto flex items-center gap-[8px] pr-[7px]">
                <Glyph name="yellowLeft" className="size-[11px]" />
                <Glyph name="grayRight" className="size-[11px]" />
                <Kebab />
                <MinMax />
              </div>
            </div>
            <div className="mx-[3px] flex h-[20px] shrink-0 items-center gap-[6px] border-b border-[#c5d0dc] pl-[2px] text-[#2f7ac8]">
              {helpNav.map((item) => (
                <div key={item.label} className="flex items-center gap-[3px]">
                  <Glyph name={item.icon} />
                  <span className={item.bold ? 'font-bold text-[#2563ae]' : ''}>{item.label}</span>
                </div>
              ))}
            </div>
            <div className="pl-[4px] pt-[10px]">
              <h3 className="font-bold leading-[13px] text-[#444]">About AADL Navigator</h3>
              <p className="w-[330px] pt-[3px] leading-[13px]">The Project Explorer provides a hierarchical view of the artifacts in the Workbench.</p>
              <p className="pt-[6px] leading-[13px] text-[#2f7ac8]">See also:</p>
              <div className="flex h-[20px] items-center pt-[7px] text-[#2f7ac8]"><Glyph name="page" className="size-[11px]" /><span className="pl-[5px]">Project Explorer</span></div>
              <div className="flex h-[19px] items-center pt-[6px] text-[#2f7ac8]"><Glyph name="page" className="size-[11px]" /><span className="pl-[5px]">Views</span></div>
              <p className="pt-[7px] leading-[13px] text-[#2f7ac8]">More results:</p>
              <div className="flex h-[20px] items-center pt-[6px] text-[#2f7ac8]"><Glyph name="searchTopic" /><span className="pl-[4px]">Search for AADL Navigator view</span></div>
            </div>
          </section>
        </div>

        <div className="flex h-[20px] shrink-0 items-center bg-[#f2f2f2] pl-[5px]">
          <Glyph name="aadl" />
          <span className="pl-[2px]">latency-case-study/functional.aadl</span>
          <div className="ml-auto flex items-center gap-[4px] pr-[163px]">
            <Grip />
            <span className="text-[#222]">Instantiation</span>
          </div>
        </div>
        <div className="mr-[4px] min-h-0 flex-1 bg-gradient-to-r from-[#1b2a38] from-90% to-[#5b6670]" />
      </div>

      <div className="flex w-[6px] shrink-0 flex-col">
        <div className="h-[26px] bg-[#7b3a7b]" />
        <div className="h-[100px]" />
        <div className="h-[46px] border-y border-[#e0e0e0]" />
        <div className="overflow-hidden whitespace-nowrap text-[#888]">st</div>
      </div>

      <Dialog />

      {/* annotation the author drew on the screenshot */}
      <div className="pointer-events-none absolute left-[775px] top-[484px] h-[66px] w-[103px] border-2 border-[#e5201c]" />

      {/* netdisk upload widget floating over the toolbar */}
      <div className="absolute left-[1341px] top-[22px] flex h-[19px] w-[81px] overflow-hidden rounded-[3px] border border-[#1b8cf0]">
        <div className="flex w-[23px] items-center justify-center bg-[#1b8cf0]">
          <svg viewBox="0 0 16 12" className="h-[11px] w-[15px]" fill="none" stroke="#fff" strokeWidth="2"><circle cx="8" cy="4" r="2.800" /><circle cx="4" cy="8" r="2.800" /><circle cx="12" cy="8" r="2.800" /></svg>
        </div>
        <div className="flex flex-1 items-center justify-center bg-[#d6eefc] font-['Noto_Sans_CJK_SC',sans-serif] text-[10px] text-[#7fc0ee]">拖拽上传</div>
      </div>

      {/* watermarks */}
      <div className="pointer-events-none absolute left-[1328px] top-[774px] whitespace-nowrap font-['Noto_Sans_CJK_SC',sans-serif] text-[18px] leading-[22px] text-[#8a8a8a]/80">@稀土掘金技术社区</div>
      <div className="pointer-events-none absolute left-[1459px] top-[797px] h-[9px] w-[19px] bg-[#17b31d]" />
      <div className="pointer-events-none absolute left-[1373px] top-[794px] whitespace-nowrap font-['Liberation_Sans',sans-serif] text-[14px] leading-[17px] text-[#8a8a8a]/90">CSDN @print_Hyon</div>
    </div>
  );
}
